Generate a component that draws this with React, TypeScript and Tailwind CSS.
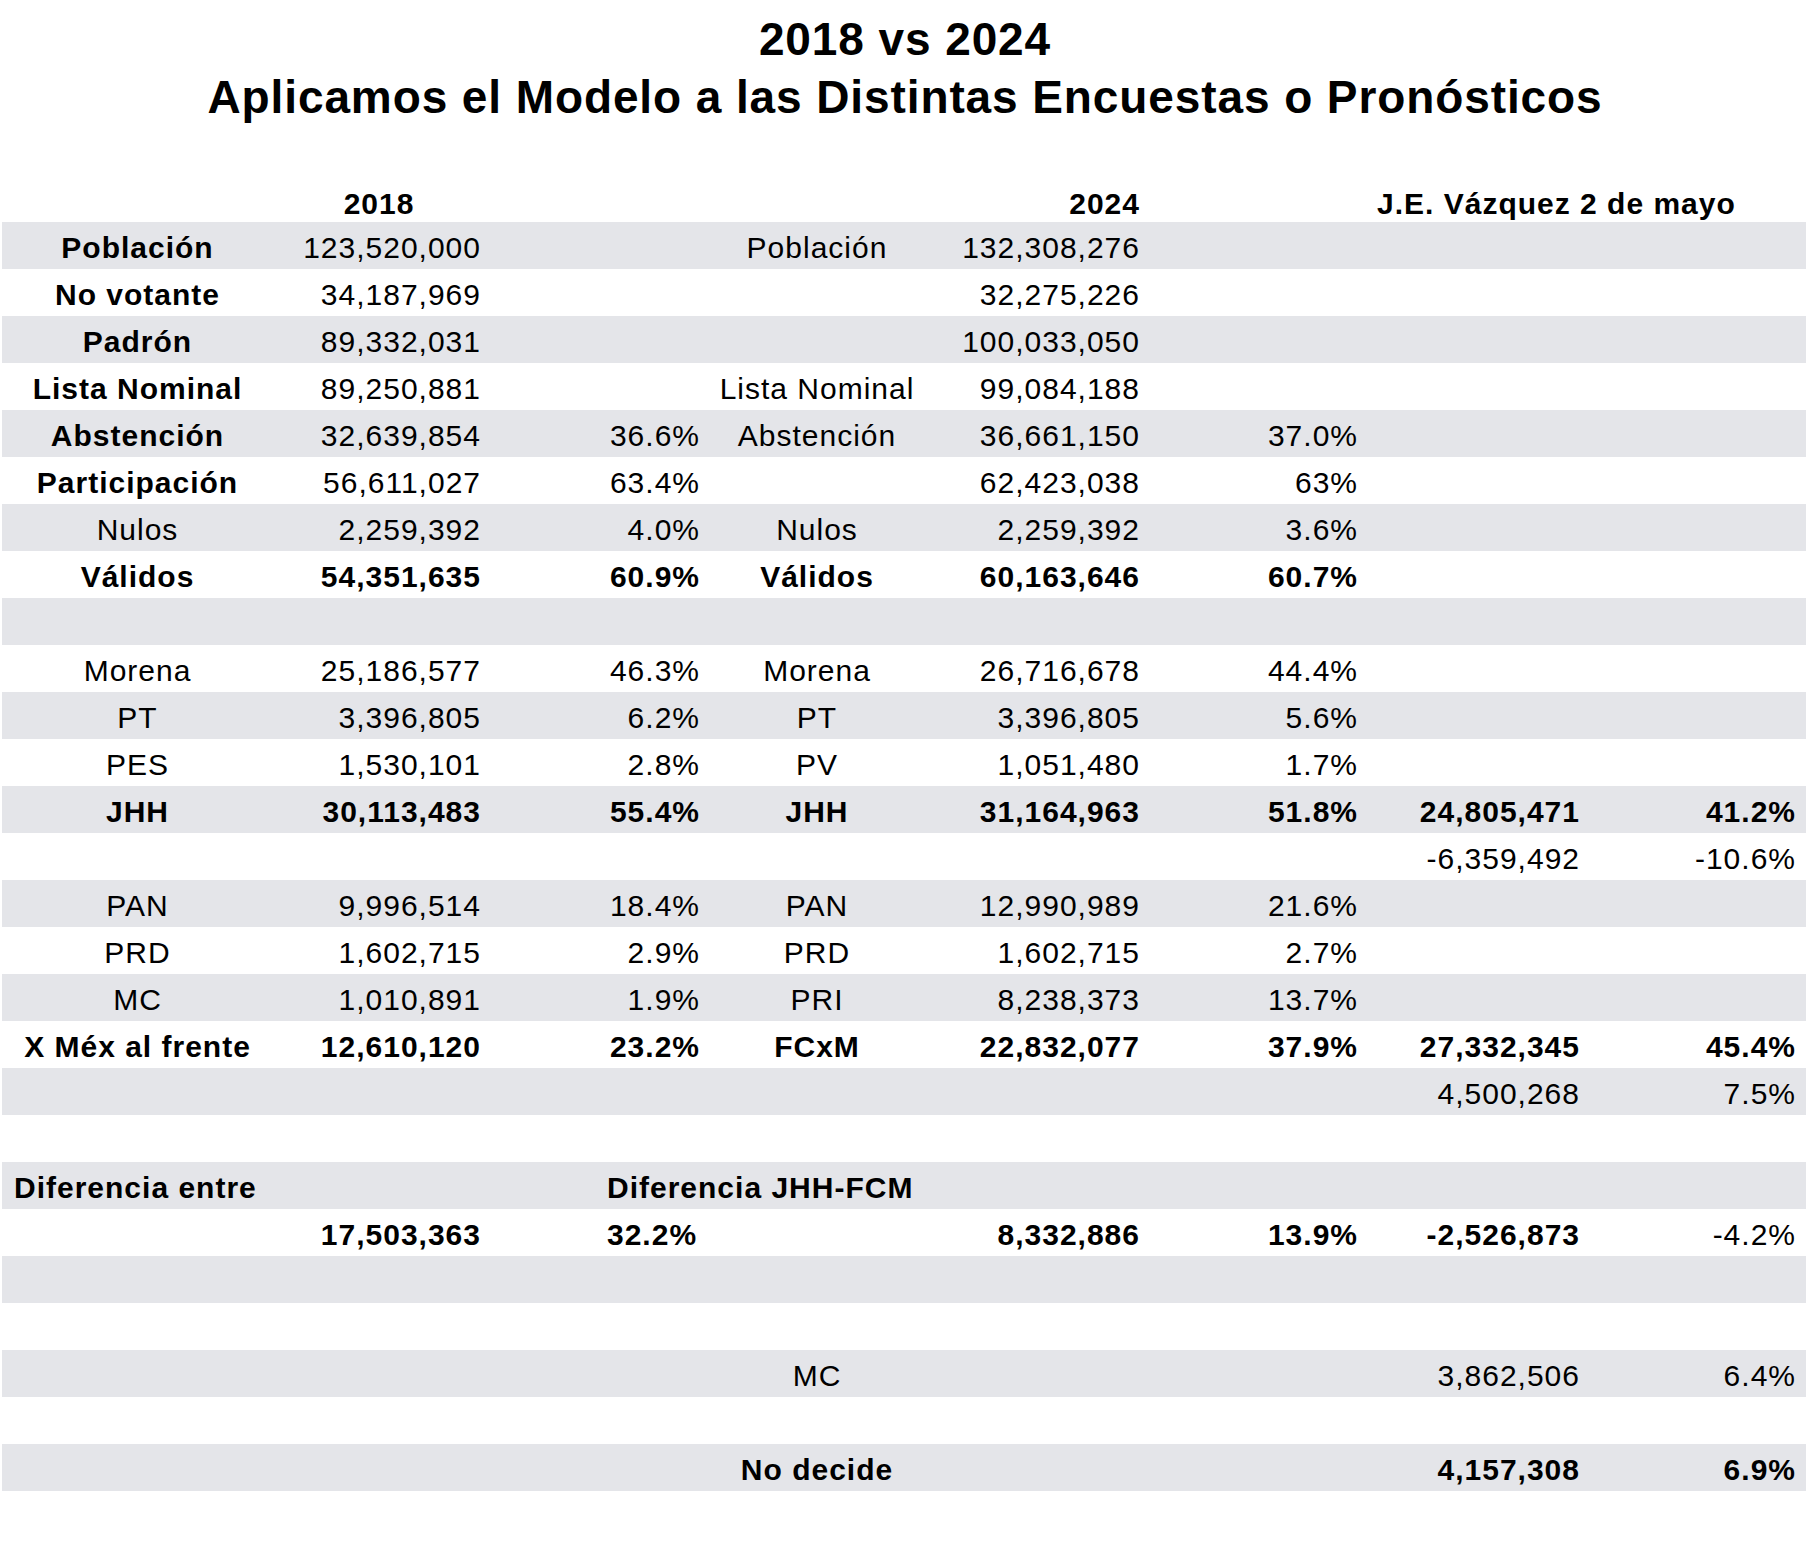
import React from "react";

type Cell = string | { t: string; b?: boolean; left?: boolean } | null;
type Row = { gray?: boolean; bold?: boolean; cells: Cell[] };

const colClass = [
  "w-[271px] justify-center",
  "w-[212px] justify-end pr-[4px]",
  "w-[115px] justify-end",
  "w-[104px] justify-end pr-[4px]",
  "w-[226px] justify-center",
  "w-[213px] justify-end pr-[3px]",
  "w-[218px] justify-end pr-[3px]",
  "w-[222px] justify-end pr-[3px]",
  "w-[223px] justify-end pr-[10px]",
];

const leftClass = [
  "w-[271px] justify-start pl-[12px]",
  "w-[212px] justify-start pl-[7px]",
  "w-[115px] justify-start",
  "w-[104px] justify-start pl-[7px]",
  "w-[226px] justify-start",
  "w-[213px] justify-start",
  "w-[218px] justify-start",
  "w-[222px] justify-start pl-[16px]",
  "w-[223px] justify-start",
];

// cells order: A, B, spacer, C, D, E, F, G, H
const rows: Row[] = [
  { gray: true, cells: [{ t: "Población", b: true }, "123,520,000", null, null, "Población", "132,308,276", null, null, null] },
  { cells: [{ t: "No votante", b: true }, "34,187,969", null, null, null, "32,275,226", null, null, null] },
  { gray: true, cells: [{ t: "Padrón", b: true }, "89,332,031", null, null, null, "100,033,050", null, null, null] },
  { cells: [{ t: "Lista Nominal", b: true }, "89,250,881", null, null, "Lista Nominal", "99,084,188", null, null, null] },
  { gray: true, cells: [{ t: "Abstención", b: true }, "32,639,854", null, "36.6%", "Abstención", "36,661,150", "37.0%", null, null] },
  { cells: [{ t: "Participación", b: true }, "56,611,027", null, "63.4%", null, "62,423,038", "63%", null, null] },
  { gray: true, cells: ["Nulos", "2,259,392", null, "4.0%", "Nulos", "2,259,392", "3.6%", null, null] },
  { bold: true, cells: ["Válidos", "54,351,635", null, "60.9%", "Válidos", "60,163,646", "60.7%", null, null] },
  { gray: true, cells: [null, null, null, null, null, null, null, null, null] },
  { cells: ["Morena", "25,186,577", null, "46.3%", "Morena", "26,716,678", "44.4%", null, null] },
  { gray: true, cells: ["PT", "3,396,805", null, "6.2%", "PT", "3,396,805", "5.6%", null, null] },
  { cells: ["PES", "1,530,101", null, "2.8%", "PV", "1,051,480", "1.7%", null, null] },
  { gray: true, bold: true, cells: ["JHH", "30,113,483", null, "55.4%", "JHH", "31,164,963", "51.8%", "24,805,471", "41.2%"] },
  { cells: [null, null, null, null, null, null, null, "-6,359,492", "-10.6%"] },
  { gray: true, cells: ["PAN", "9,996,514", null, "18.4%", "PAN", "12,990,989", "21.6%", null, null] },
  { cells: ["PRD", "1,602,715", null, "2.9%", "PRD", "1,602,715", "2.7%", null, null] },
  { gray: true, cells: ["MC", "1,010,891", null, "1.9%", "PRI", "8,238,373", "13.7%", null, null] },
  { bold: true, cells: ["X Méx al frente", "12,610,120", null, "23.2%", "FCxM", "22,832,077", "37.9%", "27,332,345", "45.4%"] },
  { gray: true, cells: [null, null, null, null, null, null, null, "4,500,268", "7.5%"] },
  { cells: [null, null, null, null, null, null, null, null, null] },
  { gray: true, cells: [{ t: "Diferencia entre", b: true, left: true }, null, null, { t: "Diferencia JHH-FCM", b: true, left: true }, null, null, null, null, null] },
  { cells: [null, { t: "17,503,363", b: true }, null, { t: "32.2%", b: true, left: true }, null, { t: "8,332,886", b: true }, { t: "13.9%", b: true }, { t: "-2,526,873", b: true }, "-4.2%"] },
  { gray: true, cells: [null, null, null, null, null, null, null, null, null] },
  { cells: [null, null, null, null, null, null, null, null, null] },
  { gray: true, cells: [null, null, null, null, "MC", null, null, "3,862,506", "6.4%"] },
  { cells: [null, null, null, null, null, null, null, null, null] },
  { gray: true, cells: [null, null, null, null, { t: "No decide", b: true }, null, null, { t: "4,157,308", b: true }, { t: "6.9%", b: true }] },
];

function CellView({ cell, idx, rowBold }: { cell: Cell; idx: number; rowBold: boolean }) {
  if (cell === null) return <div className={`flex shrink-0 ${colClass[idx]}`} />;
  const obj = typeof cell === "string" ? { t: cell } : cell;
  const bold = obj.b ?? rowBold;
  const cls = obj.left ? leftClass[idx] : colClass[idx];
  return (
    <div className={`flex shrink-0 overflow-visible whitespace-nowrap ${cls}`}>
      <span className={bold ? "font-bold" : "font-normal"}>{obj.t}</span>
    </div>
  );
}

export default function App() {
  return (
    <div
      className="w-[1810px] h-[1542px] bg-white text-black"
      style={{ fontFamily: '"Liberation Sans", Arial, Helvetica, sans-serif' }}
    >
      <div className="pt-[10px] flex flex-col items-center text-[46px] leading-[58px] font-bold tracking-[0.9px]">
        <div>2018 vs 2024</div>
        <div>Aplicamos el Modelo a las Distintas Encuestas o Pronósticos</div>
      </div>
      <div className="ml-[2px] mt-[49px] w-[1804px] text-[30px] tracking-[1px]">
        <div className="flex h-[47px] pt-[10px] leading-[37px]">
          <div className="flex shrink-0 w-[271px]" />
          <div className="flex shrink-0 w-[212px] justify-center">
            <span className="font-bold">2018</span>
          </div>
          <div className="flex shrink-0 w-[115px]" />
          <div className="flex shrink-0 w-[104px]" />
          <div className="flex shrink-0 w-[226px]" />
          <div className="flex shrink-0 w-[213px] justify-end pr-[3px]">
            <span className="font-bold">2024</span>
          </div>
          <div className="flex shrink-0 w-[218px]" />
          <div className="flex shrink-0 w-[222px] justify-start pl-[16px] whitespace-nowrap">
            <span className="font-bold">J.E. Vázquez 2 de mayo</span>
          </div>
          <div className="flex shrink-0 w-[223px]" />
        </div>
        {rows.map((r, i) => (
          <div
            key={i}
            className={`flex h-[47px] pt-[4px] leading-[43px] ${r.gray ? "bg-[#e4e5e9]" : "bg-white"}`}
          >
            {r.cells.map((c, j) => (
              <CellView key={j} cell={c} idx={j} rowBold={!!r.bold} />
            ))}
          </div>
        ))}
      </div>
    </div>
  );
}
